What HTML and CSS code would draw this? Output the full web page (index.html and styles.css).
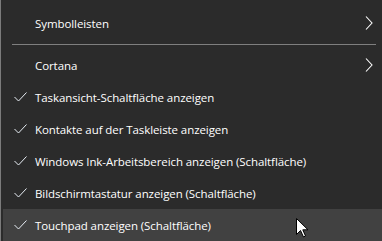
FILE: index.html
```html
<!DOCTYPE html>
<html lang="de">
<head>
  <meta charset="UTF-8">
  <title>Kontextmenü</title>
  <link rel="stylesheet" href="styles.css">
</head>
<body>

<!-- Kontextmenü der Taskleiste -->
<div class="menu">
  <div class="item">
    <span class="check"></span>
    <span class="label">Symbolleisten</span>
    <span class="arrow"><svg width="8" height="14" viewBox="0 0 8 14"><path d="M1 0.5 L7 7 L1 13.5" fill="none" stroke="#fff" stroke-width="1.1"/></svg></span>
  </div>
  <div class="separator"></div>
  <div class="item">
    <span class="check"></span>
    <span class="label">Cortana</span>
    <span class="arrow"><svg width="8" height="14" viewBox="0 0 8 14"><path d="M1 0.5 L7 7 L1 13.5" fill="none" stroke="#fff" stroke-width="1.1"/></svg></span>
  </div>
  <div class="item">
    <span class="check"><svg width="13" height="10" viewBox="0 0 13 10"><path d="M0.5 5 L4.5 9 L12.5 0.5" fill="none" stroke="#e8eef5" stroke-width="1"/></svg></span>
    <span class="label">Taskansicht-Schaltfläche anzeigen</span>
  </div>
  <div class="item">
    <span class="check"><svg width="13" height="10" viewBox="0 0 13 10"><path d="M0.5 5 L4.5 9 L12.5 0.5" fill="none" stroke="#e8eef5" stroke-width="1"/></svg></span>
    <span class="label">Kontakte auf der Taskleiste anzeigen</span>
  </div>
  <div class="item">
    <span class="check"><svg width="13" height="10" viewBox="0 0 13 10"><path d="M0.5 5 L4.5 9 L12.5 0.5" fill="none" stroke="#e8eef5" stroke-width="1"/></svg></span>
    <span class="label">Windows Ink-Arbeitsbereich anzeigen (Schaltfläche)</span>
  </div>
  <div class="item">
    <span class="check"><svg width="13" height="10" viewBox="0 0 13 10"><path d="M0.5 5 L4.5 9 L12.5 0.5" fill="none" stroke="#e8eef5" stroke-width="1"/></svg></span>
    <span class="label">Bildschirmtastatur anzeigen (Schaltfläche)</span>
  </div>
  <div class="item hover">
    <span class="check"><svg width="13" height="10" viewBox="0 0 13 10"><path d="M0.5 5 L4.5 9 L12.5 0.5" fill="none" stroke="#e8eef5" stroke-width="1"/></svg></span>
    <span class="label">Touchpad anzeigen (Schaltfläche)</span>
    <!-- Mauszeiger -->
    <svg class="cursor" width="13" height="20" viewBox="0 0 13 20"><path d="M0.5 0.5 L0.5 16.5 L4.5 12.5 L7.5 19 L9.5 18 L6.8 11.8 L12 11.8 Z" fill="#fff" stroke="#000" stroke-width="1"/></svg>
  </div>
</div>

</body>
</html>
```

FILE: styles.css
```css
body {
  margin: 0;
  padding: 0;
  background-color: #2b2b2b;
  font-family: "Open Sans", "Noto Sans", sans-serif;
  font-size: 11.5px;
  letter-spacing: -0.08px;
  color: #fff;
}
.menu {
  width: 382px;
  height: 241px;
  box-sizing: border-box;
  border-left: 1px solid #7b7b7b;
  padding: 7px 0 0 2px;
  background-color: #2b2b2b;
  overflow: hidden;
}
.item {
  position: relative;
  display: flex;
  align-items: center;
  height: 32px;
}
.item.hover {
  background-color: #414141;
}
.check {
  width: 32px;
  display: flex;
  justify-content: center;
  padding-left: 2px;
  box-sizing: border-box;
}
.label {
  flex: 1;
  white-space: nowrap;
}
.arrow {
  width: 16px;
  display: flex;
  margin-right: 1px;
}
.separator {
  height: 1px;
  margin: 5px 6px 4px 9px;
  background-color: #7f7f7f;
}
.cursor {
  position: absolute;
  left: 293px;
  top: 9px;
}
```
